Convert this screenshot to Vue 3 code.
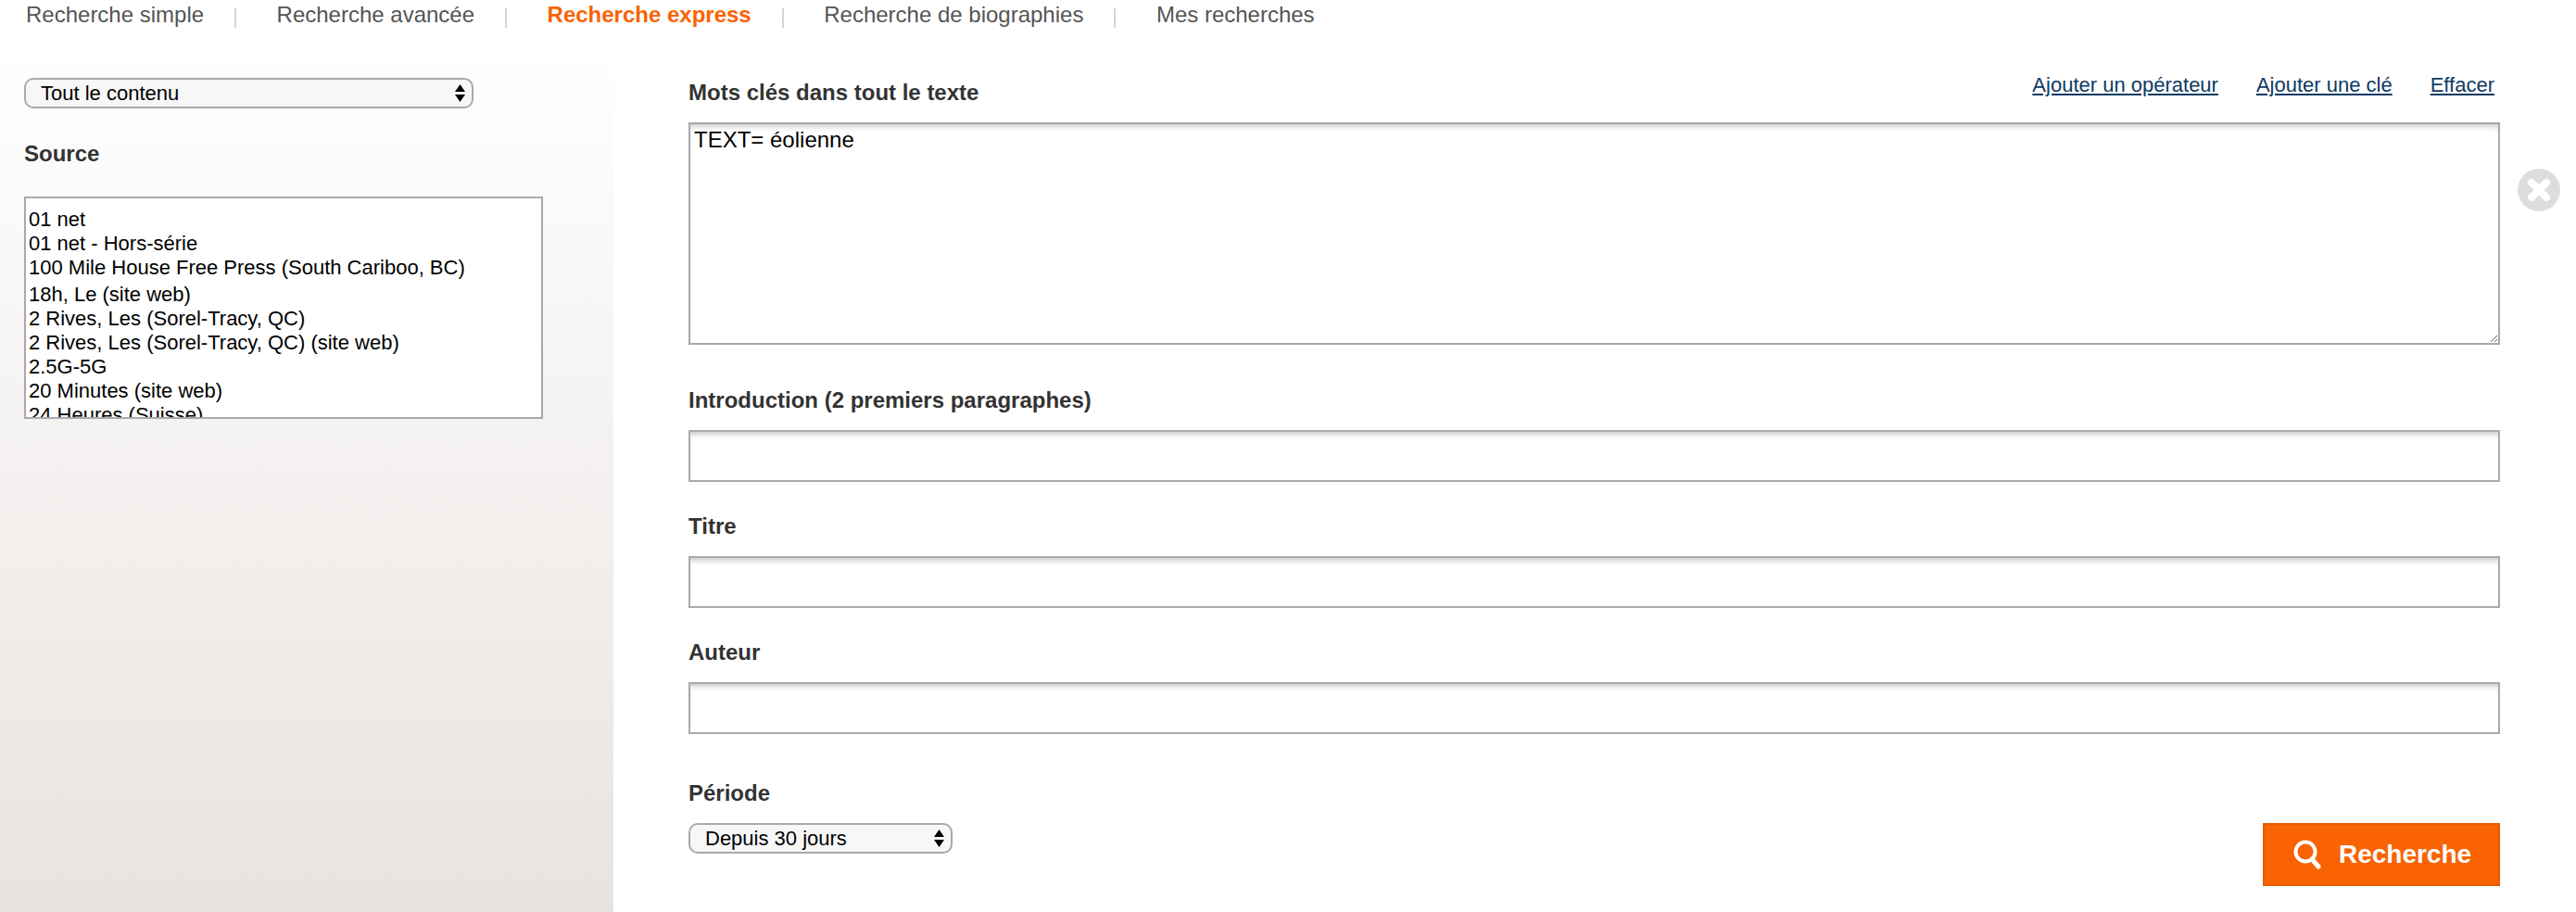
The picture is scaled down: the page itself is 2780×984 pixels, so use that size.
<template>
  <div class="page">
    <nav class="tabs">
      <template v-for="(tab, i) in tabs" :key="tab">
        <span v-if="i" class="sep"></span>
        <a class="tab" :class="{ active: tab === 'Recherche express' }">{{ tab }}</a>
      </template>
    </nav>

    <div class="columns">
      <aside class="sidebar">
        <div class="select-wrap content-select">
          <select class="select">
            <option>Tout le contenu</option>
          </select>
          <svg class="arrows" viewBox="0 0 11 19"><path d="M5.500 0L11 8H0zM5.500 19L0 11h11z" /></svg>
        </div>
        <div class="label source-label">Source</div>
        <div class="source-list">
          <div v-for="source in sources" :key="source" class="source">{{ source }}</div>
        </div>
      </aside>

      <main class="main">
        <div class="field keywords">
          <div class="keywords-head">
            <label class="label">Mots clés dans tout le texte</label>
            <div class="links">
              <a>Ajouter un opérateur</a>
              <a>Ajouter une clé</a>
              <a>Effacer</a>
            </div>
          </div>
          <textarea class="textarea" v-model="keywords"></textarea>
          <svg class="clear" viewBox="0 0 46 46">
            <circle cx="23" cy="23" r="23" fill="#dcdddf" />
            <path d="M15 15l16 16M31 15L15 31" stroke="#fff" stroke-width="8" stroke-linecap="round" />
          </svg>
        </div>

        <div v-for="name in fields" :key="name" class="field">
          <label class="label">{{ name }}</label>
          <input class="input" type="text" />
        </div>

        <div class="period">
          <div>
            <label class="label">Période</label>
            <div class="select-wrap period-select">
              <select class="select">
                <option>Depuis 30 jours</option>
              </select>
              <svg class="arrows" viewBox="0 0 11 19"><path d="M5.500 0L11 8H0zM5.500 19L0 11h11z" /></svg>
            </div>
          </div>
          <button class="search" type="button">
            <svg viewBox="0 0 30 32" width="30" height="32">
              <circle cx="13" cy="13" r="10.500" fill="none" stroke="#fff" stroke-width="4" />
              <path d="M20 21l7 8" stroke="#fff" stroke-width="5" stroke-linecap="round" />
            </svg>
            Recherche
          </button>
        </div>
      </main>
    </div>
  </div>
</template>

<script setup>
import { ref } from 'vue';

const tabs = ['Recherche simple', 'Recherche avancée', 'Recherche express', 'Recherche de biographies', 'Mes recherches'];
const fields = ['Introduction (2 premiers paragraphes)', 'Titre', 'Auteur'];
const sources = [
  '01 net',
  '01 net - Hors-série',
  '100 Mile House Free Press (South Cariboo, BC)',
  '18h, Le (site web)',
  '2 Rives, Les (Sorel-Tracy, QC)',
  '2 Rives, Les (Sorel-Tracy, QC) (site web)',
  '2.5G-5G',
  '20 Minutes (site web)',
  '24 Heures (Suisse)',
];

const keywords = ref('TEXT= éolienne');
</script>

<style>
html,
body {
  margin: 0;
  background: #fff;
}
</style>

<style scoped>
.page {
  width: 2780px;
  height: 984px;
  overflow: hidden;
  font-family: "Liberation Sans", Arial, sans-serif;
  color: #333;
}
.tabs {
  display: flex;
  align-items: center;
  height: 30px;
  padding: 1px 0 9px 28px;
}
.tab {
  font-size: 24px;
  line-height: 30px;
  color: #555;
  white-space: nowrap;
}
.tab.active {
  color: #f96302;
  font-weight: bold;
}
.sep {
  width: 2px;
  height: 21px;
  margin: 6px 43.500px 0 33px;
  background: #d4d4d4;
}
.columns {
  display: flex;
  height: 944px;
}
.sidebar {
  width: 662px;
  flex: none;
  box-sizing: border-box;
  padding: 44px 0 0 26px;
  background: linear-gradient(#fff, #e8e3e0);
}
.select-wrap {
  position: relative;
}
.content-select {
  width: 485px;
}
.period-select {
  width: 285px;
}
.select {
  display: block;
  width: 100%;
  height: 33px;
  box-sizing: border-box;
  padding: 0 0 0 16px;
  border: 2px solid #a9a9ae;
  border-radius: 10px;
  background: #f7f7f7;
  font: 22px "Liberation Sans", Arial, sans-serif;
  color: #000;
  appearance: none;
}
.arrows {
  position: absolute;
  top: 7px;
  right: 9px;
  width: 11px;
  height: 19px;
}
.label {
  display: block;
  padding-top: 1px;
  font-size: 24px;
  font-weight: bold;
  line-height: 28px;
  color: #333;
  margin-bottom: 18px;
}
.source-label {
  margin: 34px 0 32px;
}
.source-list {
  width: 560px;
  height: 240px;
  box-sizing: border-box;
  padding: 10px 0 0 3px;
  overflow: hidden;
  border: 2px solid #a9a9ae;
  background: #fff;
  font-size: 22px;
  line-height: 26px;
  color: #000;
}
.source {
  white-space: nowrap;
}
.source:nth-child(4) {
  margin-top: 3px;
}
.main {
  flex: 1;
  min-width: 0;
  padding: 45px 0 0 81px;
  margin-right: 82px;
}
.field {
  margin-bottom: 33px;
}
.keywords {
  position: relative;
  margin-bottom: 45px;
}
.keywords-head {
  display: flex;
  justify-content: space-between;
}
.links {
  display: flex;
  gap: 41px;
  margin: -7px 6px 0 0;
  font-size: 22px;
  line-height: 28px;
  color: #0c3a63;
}
.links a {
  text-decoration: underline;
}
.textarea {
  display: block;
  width: 100%;
  height: 240px;
  box-sizing: border-box;
  padding: 4px 4px;
  border: 2px solid #a9a9ae;
  border-radius: 0;
  box-shadow: inset 0 6px 6px -4px rgba(0, 0, 0, 0.25);
  font: 24px/26px "Liberation Sans", Arial, sans-serif;
  color: #000;
  outline: none;
}
.clear {
  position: absolute;
  top: 97px;
  right: -65px;
  width: 46px;
  height: 46px;
}
.input {
  display: block;
  width: 100%;
  height: 56px;
  box-sizing: border-box;
  border: 2px solid #a9a9ae;
  border-radius: 0;
  box-shadow: inset 0 6px 6px -4px rgba(0, 0, 0, 0.25);
  outline: none;
}
.period {
  display: flex;
  justify-content: space-between;
  align-items: flex-start;
  margin-top: 49px;
}
.search {
  display: flex;
  align-items: center;
  justify-content: center;
  gap: 19px;
  width: 256px;
  height: 68px;
  margin-top: 47px;
  padding-left: 8px;
  border: 2px solid #e85c00;
  background: #f96302;
  font: bold 28px "Liberation Sans", Arial, sans-serif;
  color: #fff;
}
</style>
